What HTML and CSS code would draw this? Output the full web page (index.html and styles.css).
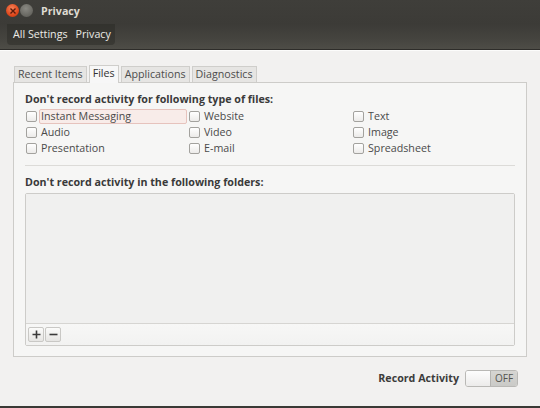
FILE: index.html
```html
<!DOCTYPE html>
<html>
<head>
<meta charset="utf-8">
<link rel="stylesheet" href="styles.css">
</head>
<body>
<div class="window">
  <div class="titlebar">
    <span class="wbtn close"><svg width="8" height="8" viewBox="0 0 8 8"><path d="M1.5 1.5L6.5 6.5M6.5 1.5L1.5 6.5" stroke="#5a1a0a" stroke-width="1.4"/></svg></span>
    <span class="wbtn min"></span>
    <span class="title">Privacy</span>
  </div>
  <div class="toolbar">
    <div class="crumbs">
      <span class="crumb">All Settings</span>
      <span class="crumb">Privacy</span>
    </div>
  </div>
  <div class="content">
    <div class="tabs">
      <span class="tab">Recent Items</span>
      <span class="tab active">Files</span>
      <span class="tab">Applications</span>
      <span class="tab">Diagnostics</span>
    </div>
    <div class="panel">
      <div class="heading">Don't record activity for following type of files:</div>
      <div class="grid">
        <label class="item"><span class="box"></span><span class="lbl focus">Instant Messaging</span></label>
        <label class="item"><span class="box"></span><span class="lbl">Website</span></label>
        <label class="item"><span class="box"></span><span class="lbl">Text</span></label>
        <label class="item"><span class="box"></span><span class="lbl">Audio</span></label>
        <label class="item"><span class="box"></span><span class="lbl">Video</span></label>
        <label class="item"><span class="box"></span><span class="lbl">Image</span></label>
        <label class="item"><span class="box"></span><span class="lbl">Presentation</span></label>
        <label class="item"><span class="box"></span><span class="lbl">E-mail</span></label>
        <label class="item"><span class="box"></span><span class="lbl">Spreadsheet</span></label>
      </div>
      <div class="hsep"></div>
      <div class="heading h2">Don't record activity in the following folders:</div>
      <div class="listframe">
        <div class="list"></div>
        <div class="listbar">
          <span class="lbtn"><svg width="9" height="9" viewBox="0 0 9 9"><path d="M4.5 0.5V8.5M0.5 4.5H8.5" stroke="#3a3a3a" stroke-width="1.6"/></svg></span>
          <span class="lbtn"><svg width="9" height="9" viewBox="0 0 9 9"><path d="M0.5 4.5H8.5" stroke="#3a3a3a" stroke-width="1.6"/></svg></span>
        </div>
      </div>
    </div>
    <div class="footer">
      <span class="rec">Record Activity</span>
      <span class="switch"><span class="knob"></span><span class="off">OFF</span></span>
    </div>
  </div>
  <div class="bottom"></div>
</div>
</body>
</html>
```

FILE: styles.css
```css
html, body {
  margin: 0;
  padding: 0;
  background: #f2f1f0;
}
body {
  font-family: "Open Sans", "Noto Sans", sans-serif;
  font-size: 10.7px;
  color: #3c3c3c;
}
.window {
  width: 540px;
  height: 408px;
  display: flex;
  flex-direction: column;
  overflow: hidden;
}
.titlebar {
  height: 21px;
  background: linear-gradient(#3f3e3a, #3c3b37);
  display: flex;
  align-items: center;
  padding: 0 0 3px 6px;
}
.wbtn {
  width: 13px;
  height: 13px;
  border-radius: 50%;
  display: inline-flex;
  align-items: center;
  justify-content: center;
  margin-right: 1px;
}
.close {
  background: radial-gradient(circle at 45% 35%, #f6845a, #e0481c 60%, #b8350f);
}
.min {
  background: radial-gradient(circle at 45% 35%, #8a8983, #66655f 70%);
}
.title {
  color: #dfdbd2;
  font-weight: bold;
  margin-left: 7px;
}
.toolbar {
  height: 25px;
  background: linear-gradient(#3c3b37, #45443f 60%, #4e4d47);
  display: flex;
  align-items: flex-start;
  padding-left: 7px;
  border-bottom: 1px solid #2e2d2a;
}
.crumbs {
  display: flex;
  background: rgba(40, 39, 36, 0.45);
  border-radius: 0 0 4px 4px;
  padding: 3px 4px 4px 6px;
  gap: 8px;
}
.crumb {
  color: #ecebe6;
}
.content {
  flex: 1;
  border-top: 1px solid #fcfcfb;
  padding: 15px 13px 0 13px;
  display: flex;
  flex-direction: column;
}
.tabs {
  display: flex;
  padding-left: 1px;
  gap: 2px;
  height: 16px;
  align-items: flex-end;
}
.tab {
  background: #e6e5e3;
  border: 1px solid #cfcecb;
  border-bottom: none;
  padding: 0 3px;
  height: 15px;
  line-height: 15px;
  color: #4c4c4c;
}
.tab.active {
  background: #f7f7f7;
  height: 17px;
  line-height: 15px;
  margin-bottom: -1px;
  position: relative;
  z-index: 1;
  color: #333;
}
.panel {
  background: #f6f6f5;
  border: 1px solid #cdccc9;
  height: 275px;
  padding: 9px 11px 10px 11px;
  box-sizing: border-box;
}
.heading {
  font-weight: bold;
  color: #3a3a3a;
  height: 14px;
  line-height: 14px;
}
.grid {
  display: grid;
  grid-template-columns: 163px 164px 1fr;
  grid-auto-rows: 16px;
  margin-top: 2px;
  padding-left: 1px;
}
.item {
  display: flex;
  align-items: center;
}
.box {
  width: 9px;
  height: 9px;
  border: 1px solid #a3a29e;
  border-radius: 2px;
  background: linear-gradient(#ffffff, #ecebe9);
  margin-right: 3px;
  flex: none;
}
.lbl {
  color: #4a4a4a;
  padding: 0 1px;
}
.lbl.focus {
  width: 144px;
  border: 1px solid #e6c3bd;
  border-radius: 2px;
  background: #f8ece9;
  margin-left: -1px;
  padding: 0 1px;
  line-height: 13px;
}
.hsep {
  height: 1px;
  background: #dcdbd8;
  margin: 9px 0 9px 0;
}
.h2 {
  margin-bottom: 4px;
}
.listframe {
  border: 1px solid #cdccc9;
  border-radius: 2px;
  display: flex;
  flex-direction: column;
}
.list {
  height: 129px;
  background: #f0f0ef;
  border-bottom: 1px solid #d6d5d2;
}
.listbar {
  height: 21px;
  background: linear-gradient(#f7f7f6, #f2f2f1);
  display: flex;
  align-items: center;
  padding-left: 2px;
  gap: 1px;
}
.lbtn {
  width: 14px;
  height: 13px;
  border: 1px solid #c9c8c5;
  border-radius: 2px;
  background: linear-gradient(#fbfbfa, #e6e5e3);
  display: inline-flex;
  align-items: center;
  justify-content: center;
}
.footer {
  display: flex;
  justify-content: flex-end;
  align-items: center;
  height: 42px;
  padding-right: 9px;
  gap: 6px;
}
.rec {
  font-weight: bold;
  color: #3c3c3c;
}
.switch {
  width: 51px;
  height: 15px;
  border: 1px solid #b9b8b5;
  border-radius: 3px;
  display: flex;
  overflow: hidden;
}
.knob {
  width: 24px;
  background: linear-gradient(#fdfdfd, #ecebea);
  border-right: 1px solid #b5b4b1;
}
.off {
  flex: 1;
  background: linear-gradient(#d6d5d2, #cacac7);
  color: #55554f;
  font-size: 10px;
  display: flex;
  align-items: center;
  justify-content: center;
}
.bottom {
  height: 2px;
  background: #3a3935;
}
```
